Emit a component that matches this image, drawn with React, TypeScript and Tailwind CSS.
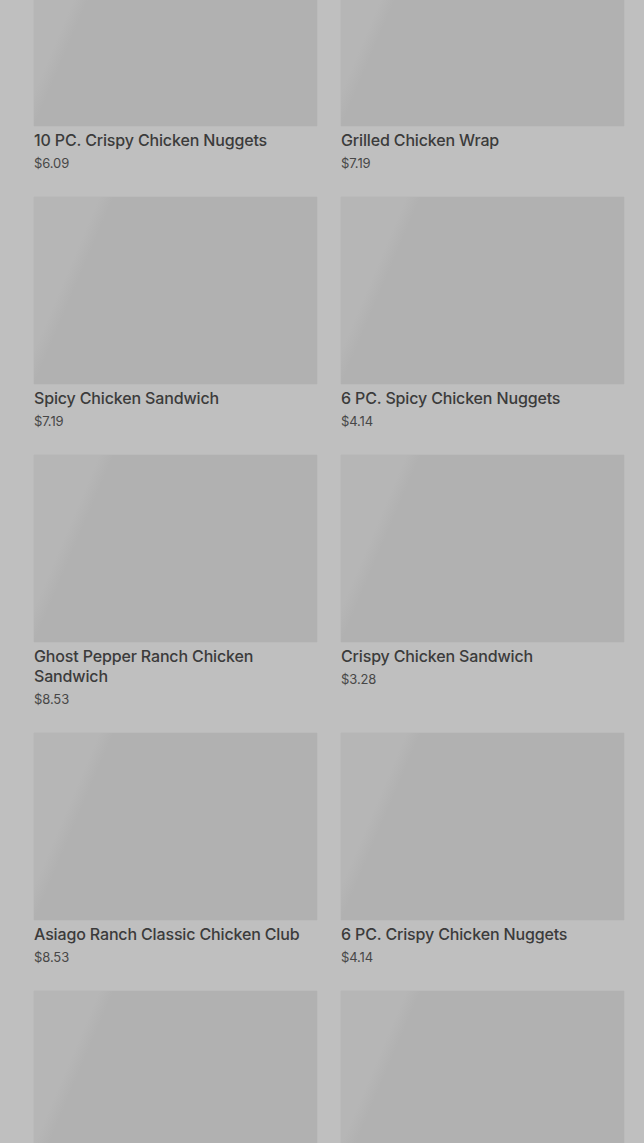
const items = [
  { name: "10 PC. Crispy Chicken Nuggets", price: "$6.09" },
  { name: "Grilled Chicken Wrap", price: "$7.19" },
  { name: "Spicy Chicken Sandwich", price: "$7.19" },
  { name: "6 PC. Spicy Chicken Nuggets", price: "$4.14" },
  { name: "Ghost Pepper Ranch Chicken Sandwich", price: "$8.53" },
  { name: "Crispy Chicken Sandwich", price: "$3.28" },
  { name: "Asiago Ranch Classic Chicken Club", price: "$8.53" },
  { name: "6 PC. Crispy Chicken Nuggets", price: "$4.14" },
];

function Thumb() {
  return (
    <div className="h-[187px] w-full bg-[linear-gradient(113deg,#b6b6b6_0%,#b6b6b6_18%,#b1b1b1_22%,#b1b1b1_100%)] shadow-[0_0_1px_rgba(0,0,0,0.12)]" />
  );
}

function MenuCard({ name, price }: { name: string; price: string }) {
  return (
    <div className="flex flex-col">
      <Thumb />
      <div className="mt-[4px] text-[16px] leading-[20px] font-medium tracking-[-0.15px] text-[#3b3b3b]">{name}</div>
      <div className="mt-[3px] text-[13px] leading-[20px] tracking-[-0.1px] text-[#474747]">{price}</div>
    </div>
  );
}

export default function App() {
  return (
    <div className="h-[1143px] overflow-hidden bg-[#bfbfbf] font-['Inter','Noto_Sans',sans-serif]">
      <div className="-mt-[61px] grid grid-cols-2 gap-x-[24px] gap-y-[24px] pl-[34px] pr-[20px]">
        {items.map((item) => (
          <MenuCard key={item.name} name={item.name} price={item.price} />
        ))}
        {/* next row is still below the fold */}
        <Thumb />
        <Thumb />
      </div>
    </div>
  );
}
